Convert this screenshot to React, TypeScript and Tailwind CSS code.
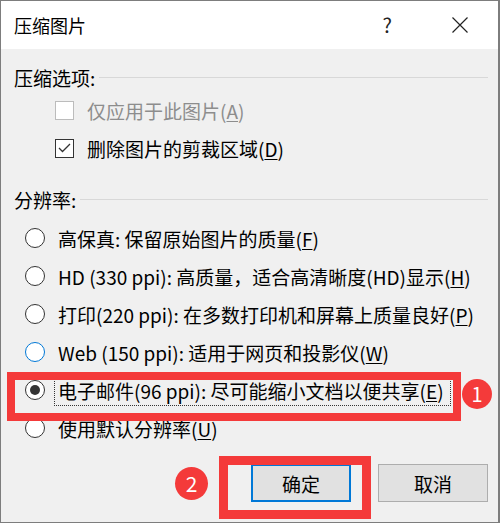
import React from 'react';

const font = "font-['Noto_Sans_CJK_SC','Noto_Sans',sans-serif]";

function Radio({ checked, hover }: { checked?: boolean; hover?: boolean }) {
  return (
    <span
      className={`flex h-5 w-5 shrink-0 items-center justify-center rounded-full border bg-white ${
        hover ? 'border-[#0078d7]' : 'border-[#333333]'
      }`}
    >
      {checked && <span className="h-[10px] w-[10px] rounded-full bg-[#333333]" />}
    </span>
  );
}

function Check({ checked, disabled }: { checked?: boolean; disabled?: boolean }) {
  return (
    <span
      className={`flex h-[19px] w-[19px] shrink-0 items-center justify-center border bg-white ${
        disabled ? 'border-[#bcbcbc]' : 'border-[#333333]'
      }`}
    >
      {checked && (
        <svg width="13" height="10" viewBox="0 0 13 10" fill="none">
          <path d="M1 5 L4.5 8.5 L12 1" stroke="#333" strokeWidth="1.3" />
        </svg>
      )}
    </span>
  );
}

function Acc({ k }: { k: string }) {
  return (
    <>
      (<span className="underline underline-offset-2">{k}</span>)
    </>
  );
}

function GroupLabel({ text }: { text: string }) {
  return (
    <div className="flex h-[28px] items-center pl-[13px] pr-[10px]">
      <span className="text-[19px] leading-none">{text}</span>
      <span className="ml-[4px] h-px flex-1 bg-[#d8d8d8]" />
    </div>
  );
}

const options = [
  { label: <>高保真: 保留原始图片的质量<Acc k="F" /></> },
  { label: <>HD (330 ppi): 高质量，适合高清晰度(HD)显示<Acc k="H" /></> },
  { label: <>打印(220 ppi): 在多数打印机和屏幕上质量良好<Acc k="P" /></> },
  { label: <>Web (150 ppi): 适用于网页和投影仪<Acc k="W" /></>, hover: true },
  { label: <>电子邮件(96 ppi): 尽可能缩小文档以便共享<Acc k="E" /></>, checked: true },
  { label: <>使用默认分辨率<Acc k="U" /></> },
];

export default function App() {
  return (
    <div className={`relative h-[523px] w-[500px] overflow-hidden border border-r-2 border-[#7d7d7d] bg-[#f0f0f0] text-black ${font}`}>
      {/* Title bar */}
      <div className="flex h-[48px] items-center bg-white pl-[13px]">
        <span className="text-[18px] leading-none">压缩图片</span>
        <span className="ml-auto mr-[60px] text-[20px] leading-none text-[#222]">?</span>
        <svg className="mr-[30px]" width="16" height="16" viewBox="0 0 16 16">
          <path d="M0.5 0.5 L15.5 15.5 M15.5 0.5 L0.5 15.5" stroke="#222" strokeWidth="1.2" />
        </svg>
      </div>

      <div className="mt-[14px]">
        <GroupLabel text="压缩选项:" />
      </div>
      <div className="flex h-[38px] items-center gap-[13px] pl-[54px]">
        <Check disabled />
        <span className="text-[19px] leading-none text-[#8d8d8d]">
          仅应用于此图片<Acc k="A" />
        </span>
      </div>
      <div className="flex h-[38px] items-center gap-[13px] pl-[54px]">
        <Check checked />
        <span className="text-[19px] leading-none">
          删除图片的剪裁区域<Acc k="D" />
        </span>
      </div>

      <div className="mt-[18px]">
        <GroupLabel text="分辨率:" />
      </div>
      <div className="mt-[6px] flex flex-col">
        {options.map((o, i) => (
          <div key={i} className="flex h-[38px] items-center gap-[13px] pl-[24px]">
            <Radio checked={o.checked} hover={o.hover} />
            <span
              className={`whitespace-nowrap text-[19px] leading-none ${
                o.checked ? '-ml-[4px] border border-dotted border-[#333] py-[5px] pl-[3px] pr-[6px]' : ''
              }`}
            >
              {o.label}
            </span>
          </div>
        ))}
      </div>

      {/* Buttons */}
      <div className="mt-[17px] flex justify-end gap-[27px] pr-[10px]">
        <button className="flex h-[38px] w-[100px] items-center justify-center border-2 border-[#0078d7] bg-[#e1e1e1] text-[19px] leading-none">
          确定
        </button>
        <button className="flex h-[38px] w-[110px] items-center justify-center border border-[#adadad] bg-[#e1e1e1] text-[19px] leading-none">
          取消
        </button>
      </div>

      {/* Annotations */}
      <div className="pointer-events-none absolute left-[6px] top-[371px] h-[49px] w-[454px] border-[8px] border-[#f43a3a]" />
      <div className="pointer-events-none absolute left-[461px] top-[378px] flex h-[30px] w-[30px] items-center justify-center rounded-full bg-[#f43a3a] text-[20px] leading-none text-white">
        1
      </div>
      <div className="pointer-events-none absolute left-[218px] top-[455px] h-[63px] w-[152px] border-[9px] border-[#f43a3a]" />
      <div className="pointer-events-none absolute left-[174px] top-[466px] flex h-[33px] w-[33px] items-center justify-center rounded-full bg-[#f43a3a] text-[21px] leading-none text-white">
        2
      </div>
    </div>
  );
}
